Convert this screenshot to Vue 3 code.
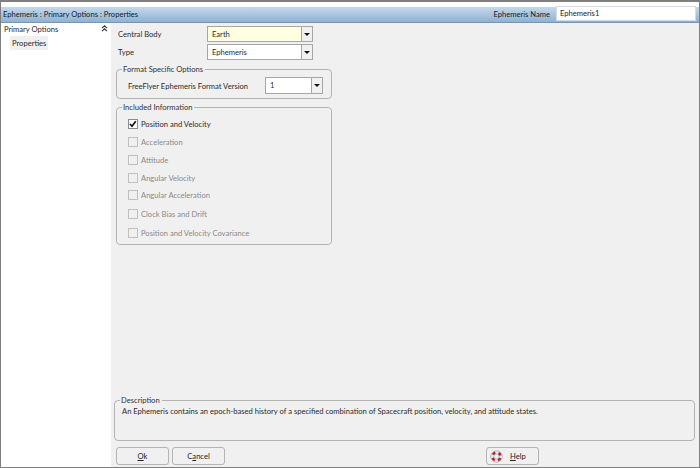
<script setup>
const options = [
  { label: 'Position and Velocity', checked: true },
  { label: 'Acceleration' },
  { label: 'Attitude' },
  { label: 'Angular Velocity' },
  { label: 'Angular Acceleration' },
  { label: 'Clock Bias and Drift' },
  { label: 'Position and Velocity Covariance' },
]
</script>

<template>
  <div class="window">
    <header class="title">
      <span class="crumb">Ephemeris : Primary Options : Properties</span>
      <span class="name-label">Ephemeris Name</span>
      <div class="name-input">Ephemeris1</div>
    </header>
    <div class="body">
      <aside class="side">
        <div class="side-head">
          <span>Primary Options</span>
          <svg class="chev" width="7" height="7" viewBox="0 0 7 7"><path d="M1 3.2 3.5 .8 6 3.2M1 6.2 3.5 3.8 6 6.2" fill="none" stroke="#333" stroke-width="1.1"/></svg>
        </div>
        <div class="side-item">Properties</div>
      </aside>
      <main class="main">
        <div class="form-row first">
          <span class="row-label">Central Body</span>
          <div class="combo yellow wide">
            <span class="combo-text">Earth</span>
            <span class="combo-btn"><i class="arrow"></i></span>
          </div>
        </div>
        <div class="form-row second">
          <span class="row-label">Type</span>
          <div class="combo wide">
            <span class="combo-text">Ephemeris</span>
            <span class="combo-btn"><i class="arrow"></i></span>
          </div>
        </div>
        <section class="group format">
          <span class="legend">Format Specific Options</span>
          <span class="version-label">FreeFlyer Ephemeris Format Version</span>
          <div class="combo narrow">
            <span class="combo-text">1</span>
            <span class="combo-btn"><i class="arrow"></i></span>
          </div>
        </section>
        <section class="group included">
          <span class="legend">Included Information</span>
          <div v-for="o in options" :key="o.label" class="check-row" :class="{ off: !o.checked }">
            <span class="box">
              <svg v-if="o.checked" width="8" height="8" viewBox="0 0 8 8"><path d="M1 4 3 6.2 6.8 1.2" fill="none" stroke="#111" stroke-width="1.7"/></svg>
            </span>
            <span>{{ o.label }}</span>
          </div>
        </section>
        <section class="group description">
          <span class="legend">Description</span>
          <p class="desc-text">An Ephemeris contains an epoch-based history of a specified combination of Spacecraft position, velocity, and attitude states.</p>
        </section>
        <footer class="buttons">
          <button class="btn"><u>O</u>k</button>
          <button class="btn">C<u>a</u>ncel</button>
          <button class="btn help">
            <svg width="13" height="13" viewBox="0 0 13 13">
              <circle cx="6.5" cy="6.5" r="5.6" fill="#fff" stroke="#8d8d94" stroke-width=".8"/>
              <circle cx="6.5" cy="6.5" r="4" fill="none" stroke="#e6e6ea" stroke-width="2.6"/>
              <circle cx="6.5" cy="6.5" r="4" fill="none" stroke="#b3202a" stroke-width="2.6" stroke-dasharray="3 3.28" stroke-dashoffset="4.7"/>
              <circle cx="6.5" cy="6.5" r="2.5" fill="#f0f0f0" stroke="#8d8d94" stroke-width=".5"/>
            </svg>
            <span><u>H</u>elp</span>
          </button>
        </footer>
      </main>
    </div>
  </div>
</template>

<style>
html, body { margin: 0; padding: 0; }
</style>

<style scoped>
.window {
  width: 700px;
  height: 468px;
  box-sizing: border-box;
  display: flex;
  flex-direction: column;
  background: #fff;
  border: 1px solid #7f7f7f;
  border-width: 2px 1px 1px 1px;
  padding-top: 5px;
  font-family: Lato, "Noto Sans", sans-serif;
  font-size: 7.6px;
  color: #2a2a2a;
  overflow: hidden;
}
.title {
  height: 16px;
  flex: none;
  box-sizing: border-box;
  display: flex;
  align-items: center;
  padding: 0 0 1px 2px;
  background: linear-gradient(#c5d8ea, #8fb2d3);
  color: #10202f;
  border-bottom: 1px solid #7a94ae;
}
.crumb { flex: 1; }
.name-label { margin-right: 6px; }
.name-input {
  width: 140px;
  height: 15px;
  margin: -1px 3px 0 0;
  box-sizing: border-box;
  padding-left: 3px;
  line-height: 13px;
  background: #fff;
  border: 1px solid #cfdbe7;
  color: #222;
}
.body { flex: 1; display: flex; min-height: 0; }
.side { width: 110px; flex: none; background: #fff; box-sizing: border-box; }
.side-head {
  display: flex;
  justify-content: space-between;
  align-items: center;
  height: 12px;
  padding: 0 2px 0 3px;
}
.chev { margin-bottom: 2px; margin-right: 1px; }
.side-item {
  width: 38px;
  height: 14px;
  line-height: 14px;
  margin: 1px 0 0 9px;
  box-sizing: border-box;
  padding-left: 2px;
  background: #f0f0f0;
}
.main {
  flex: 1;
  display: flex;
  flex-direction: column;
  background: #f0f0f0;
  padding: 0 4px 0 3px;
  min-width: 0;
}
.form-row { display: flex; align-items: center; height: 16px; padding-left: 4px; }
.form-row.first { margin-top: 3px; }
.form-row.second { margin-top: 2px; }
.row-label { width: 89px; }
.combo {
  box-sizing: border-box;
  display: flex;
  height: 16px;
  background: #fff;
  border: 1px solid #a6a6a6;
}
.combo.wide { width: 106px; }
.combo.narrow { width: 58px; height: 17px; }
.combo.yellow { background: #ffffe1; }
.combo-text { flex: 1; padding-left: 4px; line-height: 14px; }
.combo-btn {
  width: 10px;
  background: #f0f0f0;
  border-left: 1px solid #a6a6a6;
  display: flex;
  align-items: center;
  justify-content: center;
}
.arrow {
  width: 0;
  height: 0;
  border: 3px solid transparent;
  border-top: 3px solid #111;
  border-bottom: 0;
}
.group {
  position: relative;
  box-sizing: border-box;
  width: 216px;
  margin-left: 2px;
  border: 1px solid #b4b4b4;
  border-radius: 4px;
}
.legend {
  position: absolute;
  top: -7px;
  left: 5px;
  padding: 0 2px 0 1px;
  line-height: 12px;
  background: #f0f0f0;
  color: #333;
}
.format {
  margin-top: 9px;
  height: 30px;
  display: flex;
  align-items: center;
  justify-content: space-between;
  padding: 3px 8px 0 11px;
}
.included {
  margin-top: 8px;
  height: 138px;
  padding: 6px 0 0 11px;
  display: grid;
  grid-template-rows: 19px 18.5px 17.5px 17px 18px 19px 19px;
  align-content: start;
}
.check-row {
  display: flex;
  align-items: center;
  gap: 3px;
}
.check-row.off { color: #8a8a8a; }
.box {
  box-sizing: border-box;
  width: 10px;
  height: 10px;
  background: #fff;
  border: 1px solid #8c8c8c;
  display: flex;
}
.off .box { background: #f0f0f0; border-color: #c0c0c0; }
.description {
  margin: auto 0 0 0;
  width: 581px;
  height: 41px;
}
.desc-text { margin: 0; padding: 4px 0 0 7px; line-height: 12px; }
.buttons {
  display: flex;
  gap: 3px;
  height: 18px;
  margin: 6px 0 2px 2px;
}
.btn {
  width: 53px;
  height: 18px;
  padding: 0;
  box-sizing: border-box;
  background: #f0f0f0;
  border: 1px solid #b4b4b4;
  border-radius: 3px;
  font: inherit;
  color: #222;
}
.help {
  margin-left: 258px;
  display: flex;
  align-items: center;
  gap: 7px;
  padding-left: 3px;
}
</style>
